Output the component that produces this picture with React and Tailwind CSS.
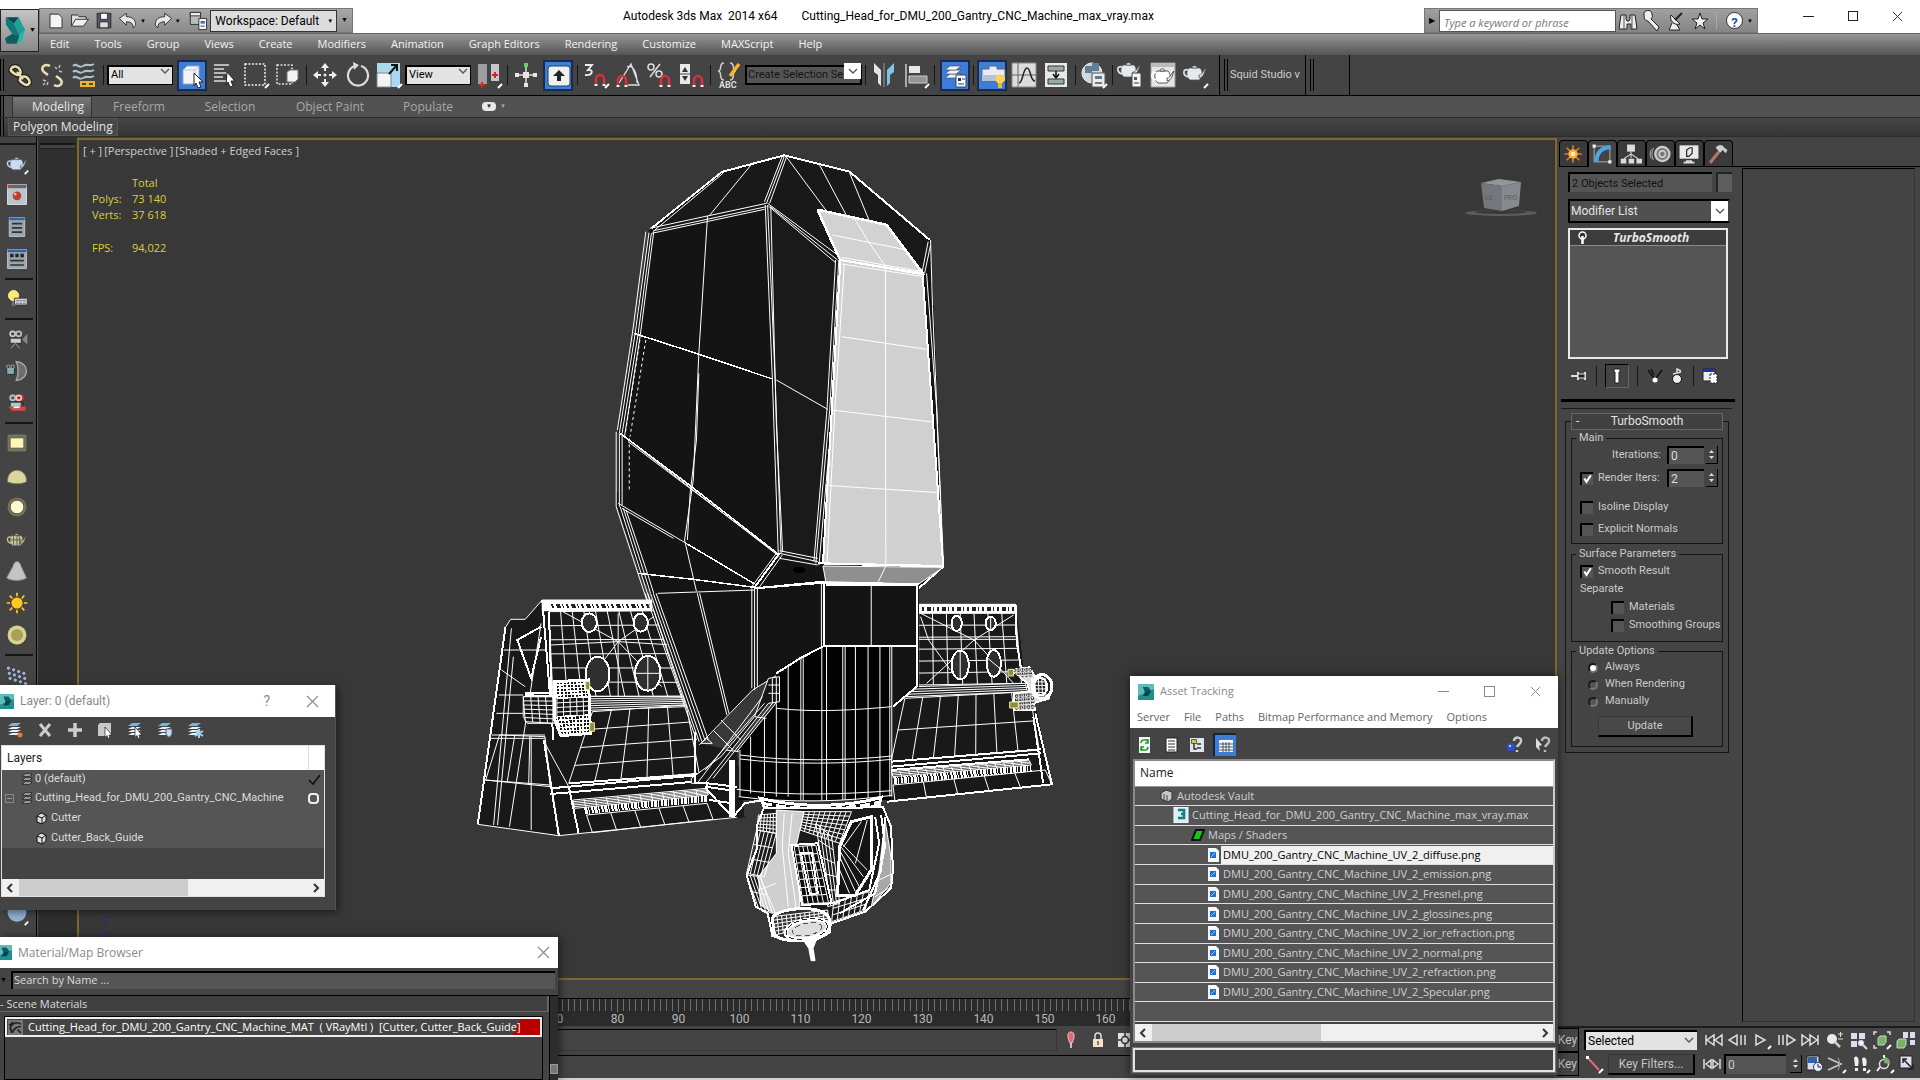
import React from 'react'

/* ---------- shared bits ---------- */

const Icon = ({ className = 'size-7', box = '0 0 28 28', children }) => (
  <svg viewBox={box} className={`${className} shrink-0`} fill="none" aria-hidden="true">{children}</svg>
)

const Chevron = ({ className }) => (
  <svg viewBox="0 0 10 6" className={`h-[6px] w-[10px] pointer-events-none ${className}`} fill="none">
    <path d="M1 1l4 4 4-4" stroke="#555" strokeWidth="1.3" />
  </svg>
)

const AppBadge = ({ className = 'size-4' }) => (
  <svg viewBox="0 0 16 16" className={`${className} shrink-0`}>
    <rect width="16" height="16" fill="#1f8f92" />
    <path d="M0 0h16v5L0 12z" fill="#5fbcb9" />
    <path d="M5 3h5l3 4-3 5H5l2-4z" fill="#083f46" />
    <path d="M5 3h5l3 4-6 1z" fill="#0b5f66" />
  </svg>
)

const Close = ({ className = 'size-[13px]', color = '#8a8a8a' }) => (
  <svg viewBox="0 0 13 13" className={className} fill="none">
    <path d="M1 1l11 11M12 1L1 12" stroke={color} strokeWidth="1.1" />
  </svg>
)

const flyout = <path d="M23 27l4-4" stroke="#fff" strokeWidth="2" />

const magnet = (x, y) => (
  <g key={x}>
    <path d={`M${x} ${y + 10}V${y + 4}a4 4 0 0 1 8 0v6`} stroke="#d8303a" strokeWidth="2.500" />
    <path d={`M${x - 1.5} ${y + 10}h3M${x + 6.5} ${y + 10}h3`} stroke="#eee" strokeWidth="2" />
  </g>
)

const teapot = (fill, line) => (
  <g fill={fill} stroke={line} strokeWidth=".8">
    <path d="M8 10h11c3 3 3 9-1 12H9c-4-3-4-9-1-12z" />
    <path d="M18 17c4 0 4-5 7-7-2 5-2 9-7 10z" />
    <path d="M11 10c0-3 5-3 5 0z" />
    <path d="M7 12c-5-2-6 5 0 7" fill="none" stroke={fill} strokeWidth="1.6" />
  </g>
)

/* ---------- title bar ---------- */

const quickAccess = [
  ['New', <path d="M7 6h10l4 4v12H7z" fill="#f4f4f4" stroke="#222" />],
  ['Open', <g stroke="#222"><path d="M4 20V7h7l2 2h8v4" fill="#ddd" /><path d="M4 20l5-8h15l-6 8z" fill="#f0f0f0" /></g>],
  ['Save', <g stroke="#222"><path d="M6 5h16v17H6z" fill="#556" /><path d="M10 5h8v7h-8z" fill="#fff" /><path d="M9 15h10v7H9z" fill="#ddd" /></g>],
]

const TitleBar = () => (
  <header className="flex h-[34px] shrink-0 items-start border-b border-[#666] bg-white text-black">
    <div className="ml-[39px] mt-2 flex h-[25px] w-[314px] items-center border border-[#777] bg-linear-to-b from-[#a8a8a8] to-[#8a8a8a] pl-1">
      {quickAccess.map(([name, art]) => (
        <button key={name} aria-label={name} className="w-6"><Icon className="size-6">{art}</Icon></button>
      ))}
      <button aria-label="Undo" className="flex w-[35px] items-center">
        <Icon className="size-6"><path d="M4 11l8-6v4c7 0 11 3 11 10l-3 3c0-5-2-7-8-7v4z" fill="#e8e8e8" stroke="#222" /></Icon>
        <span className="text-[6px]">▼</span>
      </button>
      <button aria-label="Redo" className="flex w-9 items-center">
        <Icon className="size-6"><path d="M24 11l-8-6v4C9 9 5 12 5 19l3 3c0-5 2-7 8-7v4z" fill="#e8e8e8" stroke="#222" /></Icon>
        <span className="text-[6px]">▼</span>
      </button>
      <button aria-label="Project folder" className="w-6">
        <Icon className="size-6">
          <path d="M5 4h12v14H5z" fill="#bbb" stroke="#222" /><path d="M5 4h12v4H5z" fill="#eee" stroke="#222" />
          <path d="M15 11h9v13h-9z" fill="#f4f4f4" stroke="#222" /><path d="M17 14h5v3h-5z" fill="#2f6fc4" /><path d="M17 20h5" stroke="#333" />
        </Icon>
      </button>
      <div className="relative mb-[3px] h-[22px] w-[128px]">
        <select aria-label="Workspace" className="size-full appearance-none border border-[#333] bg-[#dcdcdc] pl-1 text-[12px] leading-5">
          <option>Workspace: Default</option>
        </select>
        <span className="pointer-events-none absolute right-1 top-2 text-[6px]">▼</span>
      </div>
      <button aria-label="Customize toolbar" className="w-[15px] text-center text-[7px]">▼</button>
    </div>
    <div className="mx-auto mt-2 flex gap-6 text-[12px] leading-4">
      <span>Autodesk 3ds Max&nbsp; 2014 x64</span>
      <span>Cutting_Head_for_DMU_200_Gantry_CNC_Machine_max_vray.max</span>
    </div>
    <div className="mt-2 flex h-[25px] w-[334px] items-center border border-[#777] bg-linear-to-b from-[#a0a0a0] to-[#858585]">
      <button aria-label="Collapse search" className="w-[14px] text-[8px]">▶</button>
      <input aria-label="Search" placeholder="Type a keyword or phrase" className="h-[22px] w-[177px] border border-[#555] bg-white px-1 pt-1 font-['Open_Sans',sans-serif] text-[11px] italic placeholder:text-[#777]" />
      <button aria-label="Find" className="w-6">
        <Icon className="size-6" box="0 0 24 24"><path d="M5 6h5v4l1 2h2l1-2V6h5l2 14h-6v-5h-4v5H3z" fill="#eee" stroke="#222" /><path d="M8 6v14M16 6v14" stroke="#555" /></Icon>
      </button>
      <button aria-label="Sign in" className="w-6">
        <Icon className="size-6" box="0 0 24 24"><path d="M4 6a4 4 0 0 1 8-1 4 4 0 0 1-1 5l8 8-2 4-9-10c-3 0-4-3-4-6z" fill="#eee" stroke="#222" /></Icon>
      </button>
      <button aria-label="Subscription" className="w-6">
        <Icon className="size-6" box="0 0 24 24"><path d="M7 6c-2 5 3 11 9 9zM8 14l-3 7h11l-3-5" fill="#eee" stroke="#222" /><path d="M11 11l7-7" stroke="#222" strokeWidth="2" /></Icon>
      </button>
      <button aria-label="Favorites" className="w-7">
        <Icon className="size-6" box="0 0 24 24"><path d="M12 4l2 6h6l-5 4 2 6-5-4-5 4 2-6-5-4h6z" fill="#eee" stroke="#222" /></Icon>
      </button>
      <button aria-label="Help" className="flex w-10 items-center border-l border-[#aaa] pl-[9px] text-[6px]">
        <span className="mr-1 grid size-[17px] place-items-center rounded-full border border-[#333] bg-white text-[13px] font-bold text-[#1d4fb8]">?</span>▼
      </button>
    </div>
    <div className="ml-[45px] mr-[17px] mt-2 flex h-4 items-center gap-[34px]">
      <button aria-label="Minimize"><i className="block h-px w-[11px] bg-[#222]" /></button>
      <button aria-label="Maximize" className="size-[10px] border border-[#222]" />
      <button aria-label="Close"><Close color="#222" className="size-[11px]" /></button>
    </div>
  </header>
)

const menus = ['Edit', 'Tools', 'Group', 'Views', 'Create', 'Modifiers', 'Animation', 'Graph Editors', 'Rendering', 'Customize', 'MAXScript', 'Help']

const MenuBar = () => (
  <nav className="flex h-[21px] shrink-0 items-center gap-px bg-linear-to-b from-[#989898] to-[#555] pl-[38px] font-['Open_Sans',sans-serif] text-[11px] text-[#f2f2f2]">
    {menus.map((m) => <button key={m} className="px-3">{m}</button>)}
  </nav>
)

/* ---------- main toolbar ---------- */

const Tool = ({ name, active, children }) => (
  <button
    aria-label={name}
    className={active ? 'mx-px grid h-[31px] w-[30px] place-items-center border-2 border-[#1c2c48] bg-[#3d7dd8]' : 'grid h-8 w-8 place-items-center'}
  >
    <Icon>{children}</Icon>
  </button>
)

const Sep = ({ className = 'w-[5px]' }) => (
  <span className={`${className} flex h-5 justify-center`}><i className="h-full w-px bg-[#161616]" /></span>
)

const Grip = () => <span className="h-8 w-1 shrink-0 border-x border-black" />

const ToolSelect = ({ label, value, className }) => (
  <span className={`relative mb-2 h-[20px] ${className}`}>
    <select aria-label={label} className="size-full appearance-none border-2 border-b border-r border-black bg-[#e3e3e3] pl-[2px] text-[11px] leading-4 text-black">
      <option>{value}</option>
    </select>
    <Chevron className="absolute right-[3px] top-[7px]" />
  </span>
)

const sheets = (x, y) => (
  <g fill="#f4f4f4" stroke="#345" strokeWidth=".6">
    <path d={`M${x} ${y + 12}l5-4h11l-5 4z`} /><path d={`M${x} ${y + 8}l5-4h11l-5 4z`} /><path d={`M${x} ${y + 4}l5-4h11l-5 4z`} />
  </g>
)

const Toolbar = () => (
  <div className="flex h-[41px] shrink-0 items-center overflow-hidden border-b border-black bg-[#444]">
    <Grip />
    <Tool name="Link">
      <g stroke="#222" strokeWidth="5"><path d="M5 8c2-4 7-3 9 1s-2 6-5 4-5-3-4-5zM14 18c2-4 7-3 9 1s-2 6-5 4-5-3-4-5z" /></g>
      <g stroke="#e8dfb0" strokeWidth="2.500"><path d="M5 8c2-4 7-3 9 1s-2 6-5 4-5-3-4-5zM14 18c2-4 7-3 9 1s-2 6-5 4-5-3-4-5zM11 11l6 7" /></g>
    </Tool>
    <Tool name="Unlink">
      <path d="M12 5C6 2 2 7 6 11l4 3M16 24c6 3 10-2 6-6l-4-3" stroke="#e8dfb0" strokeWidth="2.500" />
      <path d="M17 6l2 2M22 4l-1 3M21 10l3 1M5 19l3 1M9 24l1-3M5 24l2-2" stroke="#bbb" strokeWidth="1.500" />
    </Tool>
    <Tool name="Bind to space warp">
      <path d="M3 5c4-4 5 3 10 0s6 1 11-2M3 11c4-4 5 3 10 0s6 1 11-2M3 17c4-4 5 3 10 0s6 1 11-2" stroke="#aebfc8" strokeWidth="2" />
      <path d="M11 21h6v4h-6zM18 21h6v4h-6z" stroke="#eeb422" strokeWidth="2" />
    </Tool>
    <Sep className="w-[7px]" />
    <ToolSelect label="Selection filter" value="All" className="w-[66px]" />
    <span className="w-[3px]" />
    <Tool name="Select object" active>
      <path d="M4 8l4-4h12v14l-4 4H4z" fill="#f2f4f7" stroke="#9ab" /><path d="M16 8v14M4 8h12l4-4" stroke="#b9c3cf" />
      <path d="M15 11l9 9h-4l2 5-3 1-2-5-2 3z" fill="#fff" stroke="#222" />
    </Tool>
    <Tool name="Select by name">
      <path d="M4 4h15M4 8h10M4 12h13M4 16h9M4 20h12" stroke="#ddd" strokeWidth="1.500" />
      <path d="M17 11l8 9h-4l2 5-3 1-2-5-2 3z" fill="#fff" stroke="#222" />
    </Tool>
    <Tool name="Rectangular region"><path d="M3 3h20v21H3z" stroke="#eee" strokeWidth="1.500" strokeDasharray="2 1.500" />{flyout}</Tool>
    <Tool name="Window crossing">
      <path d="M3 4h15v19H3z" stroke="#ddd" strokeWidth="1.500" strokeDasharray="2 1.500" /><path d="M13 11l3-2h8v9l-3 3h-8z" fill="#f4f4f4" stroke="#777" />
    </Tool>
    <Sep />
    <Tool name="Move">
      <path d="M14 6v4M14 18v4M6 14h4M18 14h4" stroke="#eee" strokeWidth="2" />
      <path d="M10 7l4-5 4 5zM10 21l4 5 4-5zM7 10l-5 4 5 4zM21 10l5 4-5 4z" fill="#eee" />
      <circle cx="14" cy="14" r="1.500" fill="#eee" />
    </Tool>
    <Tool name="Rotate"><path d="M18 5a10 10 0 1 1-6 0" stroke="#ddd" strokeWidth="2.200" /><path d="M10 1l6 3-5 5z" fill="#ddd" /></Tool>
    <Tool name="Scale">
      <path d="M2 2h23v24H2z" fill="#a9d8ef" /><path d="M2 12h14v14H2z" fill="#f4f4f4" stroke="#789" /><path d="M14 13l8-9M16 4h6v6" stroke="#111" strokeWidth="2" />{flyout}
    </Tool>
    <ToolSelect label="Reference coordinate system" value="View" className="w-[66px]" />
    <span className="w-[2px]" />
    <Tool name="Pivot center">
      <path d="M3 3h9v20H3z" fill="#9aa0a6" /><path d="M16 3h8v17h-8z" fill="#c4c8cc" /><path d="M7 21v6M4 24h6M20 11v6M17 14h6" stroke="#e02020" strokeWidth="2" />{flyout}
    </Tool>
    <Sep />
    <Tool name="Manipulate">
      <path d="M14 5v18M5 14h18" stroke="#ddd" strokeWidth="1.500" /><path d="M12 2h4v4h-4z" fill="#66d264" /><path d="M11 11h6v6h-6zM3 12h4v4H3zM21 12h4v4h-4zM12 22h4v4h-4z" fill="#e6e6e6" />
    </Tool>
    <Tool name="Keyboard override" active>
      <rect x="3" y="4" width="22" height="20" rx="3" fill="#eef0f2" stroke="#246" /><path d="M14 8l6 6h-4v5h-4v-5H8z" fill="#222" />
    </Tool>
    <Sep className="w-[6px]" />
    <Tool name="Snaps"><path d="M3 4h7l-4 5c6-1 5 6-3 5" stroke="#eee" strokeWidth="1.800" />{magnet(14, 14)}{flyout}</Tool>
    <Tool name="Angle snap"><path d="M5 22L17 3l8 21H14M13 6c5-3 10 4 10 16" stroke="#ddd" strokeWidth="1.300" />{magnet(4, 15)}</Tool>
    <Tool name="Percent snap"><circle cx="5" cy="6" r="3" stroke="#ddd" strokeWidth="1.500" /><circle cx="13" cy="13" r="3" stroke="#ddd" strokeWidth="1.500" /><path d="M14 3L4 16" stroke="#ddd" strokeWidth="1.500" />{magnet(15, 15)}</Tool>
    <Tool name="Spinner snap"><path d="M2 3h10v20H2z" fill="#e8e8e8" /><path d="M4 11l3-5 3 5zM4 15l3 5 3-5z" fill="#333" /><path d="M2 13h10" stroke="#444" />{magnet(16, 15)}</Tool>
    <Sep />
    <Tool name="Edit named selections">
      <path d="M9 2C3 2 8 10 3 10c5 0 0 9 6 9M15 2c6 0 1 8 6 8-5 0 0 9-6 9" stroke="#ccc" strokeWidth="1.500" />
      <path d="M24 3l-9 12" stroke="#f2b632" strokeWidth="3.500" />
      <text x="4" y="27" fontSize="9" fontWeight="700" fill="#ddd">ABC</text>
    </Tool>
    <span className="relative mb-2 h-[20px] w-[117px]">
      <input aria-label="Named selection set" defaultValue="Create Selection Se" className="size-full border-2 border-black bg-[#555] pl-px pr-[17px] text-[11px] leading-4 text-[#141414]" />
      <span className="absolute right-px top-[2px] grid h-[16px] w-[17px] place-items-center bg-white"><Chevron /></span>
    </span>
    <Sep className="w-[6px]" />
    <Tool name="Mirror"><path d="M4 2l7 7v16l-3-3v-8l-4-3v12z" fill="#e4e4e4" /><path d="M14 2v24" stroke="#999" /><path d="M24 2l-7 7v16l3-3v-8l4-3v12z" fill="#7cc4e8" /></Tool>
    <Tool name="Align"><path d="M4 3v23" stroke="#ccc" strokeWidth="1.500" /><path d="M7 5h11v7H7z" fill="#e8e8e8" /><path d="M7 15h18v7H7z" fill="#8f969c" stroke="#ccc" />{flyout}</Tool>
    <Sep />
    <span className="w-[2px]" />
    <Tool name="Layer manager" active>{sheets(3, 4)}<path d="M14 13h10v12H14z" fill="#fff" stroke="#345" /><path d="M16 16h3v3h-3z" fill="#236" /><path d="M20 17h3M16 22h6" stroke="#236" /></Tool>
    <Sep />
    <Tool name="Toggle ribbon" active><path d="M3 7h7V4h8v3h8v12H3z" fill="#e8ecf2" stroke="#567" /><path d="M3 13h23v6H3z" fill="#b9c4d2" /><circle cx="21" cy="17" r="4.500" fill="#ffd24a" /><path d="M19 21h4v5h-4z" fill="#e8b83a" /></Tool>
    <Tool name="Curve editor"><path d="M2 2h24v24H2z" fill="#dcdcdc" stroke="#888" /><path d="M8 2v24M2 14h24" stroke="#666" /><path d="M9 22c4 0 4-15 8-15s3 13 8 13" stroke="#222" strokeWidth="1.500" /></Tool>
    <Tool name="Schematic view"><path d="M3 2h22v24H3z" fill="#e8e8e8" /><path d="M6 5h16v5H6zM6 18h16v5H6z" fill="#9aa" stroke="#333" /><path d="M14 10v6M11 13l3 4 3-4" stroke="#111" strokeWidth="1.500" /></Tool>
    <Sep className="w-[6px]" />
    <Tool name="Material editor"><circle cx="12" cy="12" r="10" fill="#cfd8de" stroke="#eee" /><path d="M5 5h7v7H5zM12 12h8v7h-8zM12 2h7v8h-7z" fill="#5f7f96" /><path d="M12 12h13v14H12z" fill="#ececec" stroke="#555" /><path d="M15 15h7v3h-7zM15 21h7v2h-7z" fill="#678" />{flyout}</Tool>
    <Sep />
    <Tool name="Render setup"><g transform="translate(-2 -6)">{teapot('#e6e9ee', '#555')}</g><path d="M15 12h9v14h-9z" fill="#f6f6f6" stroke="#444" /><path d="M17 16h3v3h-3z" fill="#2c5fb0" /><path d="M17 22h5" stroke="#333" /></Tool>
    <Tool name="Rendered frame"><path d="M2 2h24v24H2z" fill="#e6e6e6" stroke="#999" /><path d="M2 2h24v4H2z" fill="#bbb" />{teapot('#fff', '#333')}</Tool>
    <Tool name="Render"><g transform="translate(0 -3)">{teapot('#e6e9ee', '#555')}</g>{flyout}</Tool>
    <span className="ml-2 h-full w-px bg-black" />
    <span className="w-1" />
    <Grip />
    <button className="h-full px-[2px] text-[11px] text-[#ccc]">Squid Studio v</button>
    <span className="ml-[3px] h-full w-px bg-black" />
    <span className="w-1" />
    <Grip />
    <span className="h-full w-9 border-r border-black" />
  </div>
)

const Ribbon = () => (
  <div className="shrink-0 font-['Open_Sans',sans-serif] text-[12px]">
    <div className="flex h-[21px] items-center bg-[#525252] text-[#a8a8a8]">
      <span className="h-full w-1 border-x border-black bg-[#444]" />
      <button className="ml-2 h-full w-20 border border-b-0 border-[#333] bg-linear-to-b from-[#777] to-[#555] pl-3 text-[#e6e6e6]">Modeling</button>
      <button className="w-[94px]">Freeform</button>
      <button className="w-[88px]">Selection</button>
      <button className="w-[112px]">Object Paint</button>
      <button className="w-[84px]">Populate</button>
      <button aria-label="Ribbon options" className="ml-3 flex items-center gap-1 text-[6px]">
        <span className="grid h-[9px] w-[14px] place-items-center rounded-sm bg-[#e8e8e8] text-[#222]">▼</span>▼
      </button>
    </div>
    <div className="flex h-[20px] items-center border-b border-t border-[#2c2c2c] bg-linear-to-b from-[#464646] to-[#363636]">
      <span className="h-full w-1 border-x border-black bg-[#444]" />
      <button className="ml-1 h-[18px] border border-[#555] bg-[#484848] px-1 text-[12px] leading-4 text-[#e6e6e6]">Polygon Modeling</button>
    </div>
  </div>
)

/* ---------- left tool column ---------- */

const camera = (a, b) => (
  <g><circle cx="9" cy="8" r="3" stroke={a} strokeWidth="2" /><circle cx="16" cy="8" r="3" stroke={b} strokeWidth="2" /><path d="M6 13h13v6H6z" fill={a} stroke="#222" /></g>
)

const sideTools = [
  ['Teapot', <g>{teapot('#c9dcef', '#557')}{flyout}</g>],
  ['Frame buffer', <g><path d="M3 2h22v23H3z" fill="#b8c4d0" stroke="#eee" /><path d="M3 2h22v4H3z" fill="#666" /><path d="M4 4h3" stroke="#e33" strokeWidth="2" /><circle cx="14" cy="15" r="5" fill="#b8402e" /><circle cx="12" cy="13" r="1.500" fill="#f4b0a0" /></g>],
  ['Light lister', <g><path d="M5 3h18v22H5z" fill="#9aa5ae" stroke="#ccc" /><path d="M5 3h18v3H5z" fill="#2a62b4" /><path d="M8 10h12M8 15h12M8 20h12" stroke="#333" strokeWidth="2" /></g>],
  ['Camera lister', <g><path d="M3 3h22v22H3z" fill="#9aa5ae" stroke="#ccc" /><path d="M3 3h22v3H3z" fill="#2a62b4" /><path d="M6 10h4M12 10h4M18 10h4" stroke="#222" strokeWidth="4" /><path d="M6 16h16M6 21h16" stroke="#333" strokeWidth="2" /></g>],
  null,
  ['Light properties', <g><circle cx="10" cy="10" r="6" fill="#ffe96a" stroke="#fff6b0" /><path d="M8 17h5v5H8z" fill="#777" /><path d="M11 13h15v8H11z" fill="#ccd" stroke="#333" /><path d="M13 16h11M13 19h11" stroke="#666" strokeDasharray="3 1" /></g>],
  null,
  ['Physical camera', <g>{camera('#ccc', '#bbb')}<path d="M26 8v12l-6-5z" fill="#888" /><path d="M12 19l-5 6M12 19l5 6" stroke="#aaa" /></g>],
  ['Dome camera', <g><path d="M13 3c16 1 16 21 0 22 3-6 3-16 0-22z" fill="#6d6d6d" stroke="#aaa" strokeWidth="1.500" /><path d="M2 10h9v8H2z" fill="#8aa" stroke="#222" /><circle cx="4" cy="9" r="2" stroke="#9bc" /><circle cx="9" cy="9" r="2" stroke="#9bc" /></g>],
  ['Stereo camera', <g><g transform="translate(2 0)">{camera('#e02a2a', '#e02a2a')}</g>{camera('#8fd4d8', '#f0c8c8')}<path d="M4 18h20v5H8z" fill="#d44" /><path d="M10 19h7" stroke="#fff" strokeWidth="2" /></g>],
  null,
  ['Plane light', <g><rect x="3" y="4" width="22" height="20" rx="2" fill="#77745c" /><path d="M6 8h16v12H6z" fill="#fdf9b4" stroke="#555" /></g>],
  ['Dome light', <path d="M3 22C2 4 26 4 25 22c-6 3-16 3-22 0z" fill="#d9d79a" stroke="#777" />],
  ['Sphere light', <g><circle cx="14" cy="14" r="11" fill="#77745c" /><circle cx="14" cy="14" r="8" fill="#fdfbd0" stroke="#444" /></g>],
  ['Mesh light', <g>{teapot('#c8c49a', '#444')}<path d="M10 11v10M14 10v12M17 11v10M7 15h13" stroke="#554" /></g>],
  ['IES light', <path d="M14 3c2 0 4 2 5 6l6 13c-5 4-18 4-23 0L9 9c1-4 3-6 5-6z" fill="#c4c4c4" stroke="#888" />],
  ['Sun', <g><circle cx="14" cy="14" r="6.500" fill="#ffc81e" /><path d="M14 2v4M14 22v4M2 14h4M22 14h4M5.500 5.500l3 3M19.500 19.500l3 3M22.500 5.500l-3 3M8.500 19.500l-3 3" stroke="#ffc81e" strokeWidth="2" /></g>],
  ['Ambient light', <g><circle cx="14" cy="14" r="11" fill="#d8d490" /><circle cx="14" cy="14" r="7" fill="#a8a05c" /></g>],
  null,
  ['Particles', <g fill="#9fb4c8" stroke="#334">{[0, 1, 2].map((r) => [0, 1, 2, 3].map((c) => <circle key={`${r}${c}`} cx={4 + c * 6 + r} cy={6 + r * 6 + c * 2} r="2.500" />))}</g>],
]

const SideTools = () => (
  <>
    <aside className="flex w-[37px] shrink-0 flex-col border-r border-black bg-[#444] pt-[6px]">
      <i className="mb-[2px] h-[2px] w-9 bg-[#161616]" />
      {sideTools.map((t, i) => t
        ? <button key={t[0]} aria-label={t[0]} className="grid h-8 w-[34px] shrink-0 place-items-center"><Icon className="size-6">{t[1]}</Icon></button>
        : <i key={i} className="my-[3px] ml-[5px] h-[2px] w-7 shrink-0 bg-[#161616]" />)}
      <button aria-label="Sphere" className="mt-auto grid h-8 w-[34px] place-items-center">
        <Icon className="size-6"><circle cx="14" cy="12" r="11" fill="#8fb4d4" />{flyout}</Icon>
      </button>
      <button aria-label="Proxy" className="mb-[68px] grid h-7 w-[26px] place-items-center">
        <Icon className="size-4" box="0 0 16 16"><path d="M1 1h14v14H1z" fill="#ddd" /><circle cx="8" cy="7" r="4" stroke="#333" strokeWidth="1.500" /></Icon>
      </button>
    </aside>
    <div className="w-10 shrink-0 border-l border-[#555] bg-[#2f2f2f]">
      <i className="mx-[2px] mt-[6px] block h-[2px] bg-[#161616]" />
      <i className="mx-[2px] block h-[4px] border-b border-[#222] bg-[#444]" />
    </div>
  </>
)

/* ---------- viewport ---------- */

// straight wire grid between the corners of a quad
const grid = (a, b, c, d, cols, rows) => {
  const mix = (p, q, t) => [p[0] + (q[0] - p[0]) * t, p[1] + (q[1] - p[1]) * t]
  const at = (p) => `${p[0].toFixed(1)} ${p[1].toFixed(1)}`
  let out = ''
  for (let i = 0; i <= cols; i++) out += `M${at(mix(a, b, i / cols))}L${at(mix(d, c, i / cols))}`
  for (let j = 0; j <= rows; j++) out += `M${at(mix(a, d, j / rows))}L${at(mix(b, c, j / rows))}`
  return out
}

const Hood = () => (
  <g>
    <path d="M480 265L660 95 820 45 985 95 1190 300 1200 560 1225 1280 1160 1345 1160 1400 500 1400 455 1300 398 1100 400 870 440 580z" fill="#141414" stroke="none" />
    <path d="M480 265L660 95 820 45 985 95 1190 300 1170 400 1078 255 905 210 958 350 778 190z" fill="#191919" stroke="none" />
    <path d="M778 190L960 360 905 1270 808 1240z" fill="#1a1a1a" stroke="none" />
    {/* double outlines */}
    <g strokeWidth="2">
      <path d="M484 265L662 96 820 46 985 95 1188 300" />
      <path d="M905 210L1078 255 1170 400M905 210L960 355" strokeWidth="3" />
      <path d="M440 580L600 641 790 717M405 880L580 1035 808 1245M450 1300L590 1318 745 1342M575 1212L745 1332" strokeWidth="1.500" />
      <path d="M745 1345L920 1325 1160 1332M808 1240L745 1342" />
      <path d="M905 1270L1222 1280M1222 1280L1160 1345" />
    </g>
    <g strokeWidth="1">
      <path d="M488 275L665 100M820 50L775 190M826 50L783 190M816 45L770 185M738 72L632 225M825 50L925 210M908 72L978 228M985 98L1035 242" />
      <path d="M480 265L775 190M490 272L775 200M485 280L770 208M778 190L955 345M785 200L955 360M780 198L950 368" />
      <path d="M470 275L436 580 398 870M478 278L443 580 403 880M484 280L450 585 410 880M490 275L456 585 416 890" />
      <path d="M470 600L430 890M455 600L418 880M428 895L428 1050" strokeDasharray="3 3" />
      <path d="M626 228L604 641 590 1020 568 1200 605 1390M604 700L598 900 582 1060 575 1200" />
      <path d="M772 195L790 717 805 1245M778 195L797 717 812 1240M786 200L792 480 800 850 816 1235" />
      <path d="M800 720L930 808M395 875V1100M403 880V1100M410 885V1095" />
      <path d="M415 890L808 1250M425 905L800 1240M400 1090L575 1212M410 1105L540 1195" />
      <path d="M395 1100L450 1300 475 1390M405 1100L458 1300 482 1390M413 1105L466 1300 490 1390M420 1110L474 1300 498 1390" />
      <path d="M480 1362L745 1350M800 1240L735 1345M815 1245L755 1345M808 1240L905 1265M808 1255L905 1275M808 1232L905 1255" />
      <path d="M958 360L935 810 900 1270M963 360L942 810 908 1275M950 360L928 810 895 1265M1190 300L1195 500 1222 1250M1184 305L1168 400M1190 315L1175 400M1180 400L1205 800 1222 1280" />
    </g>
    <path d="M905 210L1078 255 1170 400 962 360z" fill="#d2d2d2" strokeWidth="2" />
    <path d="M962 360L1170 403 1222 1278 918 1270z" fill="#d0d0d0" strokeWidth="2" />
    <path d="M918 1278L1222 1282 1160 1332 925 1325z" fill="#8f8f8f" />
    <path d="M997 234L1033 305 1076 378 1077 1278 1058 1325M942 285L1130 330M965 590L1180 628M940 810L1195 846M925 1036L1210 1058M972 370L948 810 928 1275M965 352L1170 395M965 372L1172 410" />
    <ellipse cx="858" cy="1290" rx="16" ry="10" fill="#000" stroke="none" />
  </g>
)

const hole = (x, y, rx, ry) => <ellipse key={`${x}-${y}`} cx={x} cy={y} rx={rx} ry={ry} fill="#2f2f2f" strokeWidth="2" />

const LeftRail = () => (
  <g>
    <path d="M115 172L128 148H165L208 90H490L610 520 700 545 720 742 250 797 45 763z" fill="#191919" stroke="none" />
    <path d="M45 763L250 797 700 742" />
    <path d="M115 172L45 763M212 510L250 797M235 510L225 125M228 380L208 90M275 650L300 790M205 170L145 210 180 325 205 200" strokeWidth="2" />
    <path d="M130 175L85 765M135 260L95 765M205 160L125 770M180 500V780M250 790L215 520 275 650" />
    <path d="M128 148H165M128 148L115 172M165 148L208 90M110 240H220M105 300L165 350M98 375H160M92 430H160M80 495H215M78 505H215M62 630L228 645" />
    <path d={grid([100, 495], [215, 500], [228, 650], [65, 630], 3, 1)} />
    {/* punched plate */}
    <path d={grid([225, 125], [490, 122], [562, 380], [235, 378], 9, 6)} />
    <path d="M400 215L260 125M400 215L490 140M400 215L300 370M400 215L510 350M400 215L230 225M400 215L540 225M400 130V380" />
    {hole(327, 158, 19, 28)}{hole(457, 158, 18, 27)}{hole(348, 312, 30, 52)}{hole(475, 310, 32, 52)}
    <path d="M475 258V362M443 310H507" />
    <path d="M208 90H485V122H208z" fill="#fff" />
    <path d="M230 104H480M232 112H480" stroke="#222" strokeWidth="2" strokeDasharray="2 3 4 2 1 3" />
    <path d={grid([235, 380], [565, 378], [570, 410], [235, 425], 1, 6)} />
    <path d={grid([335, 425], [572, 405], [605, 610], [275, 640], 5, 4)} />
    <path d="M228 655L610 615M228 672L625 632M275 640L605 612" strokeWidth="2" />
    <path d={grid([285, 690], [625, 655], [628, 675], [290, 715], 12, 5)} />
    <path d="M315 722L625 685" strokeWidth="7" strokeDasharray="3 1 1 2 2 1" />
    <path d={grid([320, 735], [625, 700], [640, 748], [335, 788], 5, 1)} />
    {/* bearing block */}
    <path d="M160 380H235V460H170L160 440z" fill="#151515" /><path d={grid([160, 380], [235, 380], [240, 460], [165, 455], 4, 6)} />
    <path d="M240 335L325 330 330 490 255 497 240 450z" fill="#151515" strokeWidth="3" />
    <path d={grid([243, 335], [322, 332], [328, 380], [245, 385], 9, 5)} strokeWidth="1.500" />
    <path d={grid([245, 385], [328, 380], [330, 435], [245, 440], 5, 4)} />
    <path d={grid([245, 440], [330, 435], [328, 490], [255, 495], 9, 5)} strokeWidth="1.500" />
    <path d="M318 335h10v24h-10zM328 458h12v26h-12z" fill="#8f8c40" stroke="#f0eda0" />
    <path d="M165 370H240M165 375L240 380" strokeWidth="2" />
  </g>
)

const RightRail = () => (
  <g>
    <path d="M1160 103H1405L1418 215 1425 300 1460 430 1497 643 1080 697 1090 400z" fill="#191919" stroke="none" />
    <path d={grid([1160, 130], [1405, 130], [1420, 340], [1160, 345], 7, 6)} />
    <path d="M1300 210L1165 130M1300 210L1400 135M1300 210L1180 340M1300 210L1400 340M1185 210L1165 140M1185 210L1240 300M1160 208H1410" />
    {hole(1256, 160, 13, 23)}{hole(1342, 160, 13, 20)}{hole(1265, 285, 22, 43)}{hole(1350, 280, 18, 40)}
    <path d="M1342 142V178M1265 245V326M1335 265L1365 295" />
    <path d="M1160 103H1405V128H1160z" fill="#fff" />
    <path d="M1168 114H1400M1168 121H1400" stroke="#222" strokeWidth="2" strokeDasharray="2 3 4 2 1 3" />
    <path d="M1405 105L1408 215 1418 290M1455 430L1497 643 1080 695M1450 440L1475 640" strokeWidth="2" />
    <path d={grid([1150, 350], [1430, 340], [1435, 365], [1130, 380], 1, 4)} />
    <path d={grid([1125, 385], [1440, 365], [1465, 540], [1090, 575], 7, 2)} />
    <path d="M1090 575L1470 538M1090 590L1470 550M1090 600L1440 568" strokeWidth="2" />
    <path d={grid([1090, 605], [1440, 572], [1445, 585], [1095, 620], 16, 3)} />
    <path d="M1097 632L1445 595" strokeWidth="7" strokeDasharray="3 1 1 2 2 1" />
    <path d={grid([1095, 645], [1480, 600], [1497, 643], [1100, 692], 5, 1)} />
    <path d="M1395 300L1440 292 1455 320 1490 330V385L1450 400 1455 420 1400 420 1400 370 1440 365 1435 340z" fill="#ddd" strokeWidth="2" />
    <path d={grid([1400, 297], [1445, 295], [1445, 318], [1400, 322], 8, 3)} stroke="#333" strokeDasharray="2 2" />
    <path d={grid([1405, 375], [1450, 370], [1452, 415], [1405, 418], 8, 5)} stroke="#333" strokeDasharray="2 2" />
    <ellipse cx="1472" cy="350" rx="25" ry="36" fill="#222" strokeWidth="3" />
    <ellipse cx="1468" cy="350" rx="17" ry="26" strokeWidth="2" />
    <path d={grid([1445, 325], [1480, 325], [1482, 378], [1447, 378], 4, 5)} />
    <path d="M1386 298h14v20h-14zM1390 396h22v18h-22z" fill="#8f8c40" stroke="#f0eda0" />
  </g>
)

const Spindle = () => (
  <g>
    {/* neck panels */}
    <path d="M480 68L745 55 920 38 1160 44V350L1095 410 920 230 740 360 610 525z" fill="#141414" stroke="none" />
    <path d="M500 70L745 60M600 70L675 435M606 70L680 430M745 50V360M752 50V350M738 55V355" />
    <path d="M475 70L605 515M482 70L612 515M489 70L620 512M496 70L628 510M468 70L598 510" />
    <path d="M605 525L740 360 920 230M610 520h28l-15-15z" />
    <path d="M745 55L920 38 1160 42M920 38V228M925 45H1155V225M1155 45V350L1095 410" strokeWidth="2" />
    <path d="M1040 45V225M914 38V228" />
    {/* drum */}
    <path d="M920 228L1090 228V690H705V540L800 400V315z" fill="#020202" stroke="none" />
    <path d="M800 310L860 265 920 228H1155" strokeWidth="2" />
    <path d="M830 290V680M862 268V690M868 262V690M915 232V690M927 230V690M968 230V690M974 230V690M1000 230V690M1032 230V685M1062 230V685M1087 228V680M1092 228V680M800 400V680M770 440V680M735 500V670M708 540V680" />
    <path d="M800 415C900 428 1000 420 1092 410M708 555C830 575 980 572 1092 558M708 567C830 585 980 582 1092 568M700 658C830 680 980 672 1092 662M705 680C830 700 980 695 1092 676" />
    {/* brace */}
    <path d="M780 325L808 320V395L780 400 620 640H585V625L660 560 745 440z" fill="#161616" />
    <path d="M790 325V400L640 625M800 322V398L700 545M770 400L620 600M745 440L775 445M672 540L705 545M780 345h28M780 370h28M765 380L600 640M640 480L690 540M660 450L710 510" />
    <path d="M595 485V640H625V660L690 742 720 700 765 690" strokeWidth="2" />
    <path d="M688 570V740" strokeWidth="6" /><path d="M625 640L700 650M620 650L680 660M630 690L690 700" strokeWidth="2" />
    {/* collar */}
    <path d="M760 685C860 715 980 712 1065 682L1060 705C980 735 860 735 770 712z" fill="#111" strokeWidth="3" />
    <path d="M765 700C860 722 980 720 1062 696" strokeDasharray="10 4" strokeWidth="3" />
    {/* cutting head */}
    <path d="M768 715L1070 712 1090 770 1095 900 1090 955 1025 1025 940 1060 930 1090 900 1110 825 1110 790 1098 778 1030 748 1010 725 915 750 840 750 770z" fill="#1b1b1b" strokeWidth="2" />
    <path d="M800 720L870 725 850 830 860 1010 800 1035 760 1005 755 920 800 850z" fill="#cfcfcf" />
    <path d="M1075 750L1090 860V940L1040 1010 1060 900z" fill="#a8a8a8" />
    <path d={grid([755, 735], [800, 730], [800, 790], [750, 780], 6, 5)} />
    <path d={grid([750, 780], [800, 790], [770, 920], [725, 910], 5, 3)} />
    <path d={grid([725, 915], [760, 920], [790, 1030], [755, 1015], 4, 2)} />
    <path d={grid([870, 725], [990, 725], [960, 820], [860, 780], 9, 7)} />
    <path d={grid([900, 760], [940, 800], [960, 1000], [930, 1010], 4, 5)} />
    <path d="M838 825L905 820 940 1000 865 1005z" fill="#0d0d0d" strokeWidth="2" />
    <path d={grid([845, 830], [900, 826], [932, 998], [868, 1002], 5, 7)} />
    <path d="M862 850L890 848 905 970 885 972z" strokeWidth="2" />
    <path d="M990 755L1040 740V900L1000 975H955L960 830z" fill="#141414" strokeWidth="3" />
    <path d="M960 825L1020 920M960 840L1010 950M960 860L1000 965M960 900L985 970M1015 755L970 830M1030 750L1000 880M965 820L1030 900" />
    <path d="M1050 740L1060 820 1035 960 945 1000M1065 735L1075 830 1050 970 960 1030M1075 740L1065 900 1020 1020" strokeWidth="2" />
    <path d={grid([945, 995], [1035, 965], [1025, 1020], [940, 1055], 6, 3)} />
    <path d="M755 960L800 940M760 925L800 1035M820 730L815 830 830 1010M840 730L830 850 850 1010M1060 930L1095 910M1050 980L1090 950" />
    {/* nose */}
    <path d="M790 1045C800 1010 930 1000 935 1050V1085C900 1120 820 1120 795 1095z" fill="#333" strokeWidth="3" />
    <path d={grid([790, 1040], [930, 1020], [932, 1060], [795, 1095], 12, 5)} />
    <ellipse cx="877" cy="1078" rx="55" ry="28" transform="rotate(-14 877 1078)" fill="#ddd" strokeWidth="4" />
    <ellipse cx="877" cy="1078" rx="53" ry="30" transform="rotate(-14 877 1078)" stroke="#222" strokeDasharray="5 3" />
    <ellipse cx="878" cy="1078" rx="38" ry="18" transform="rotate(-14 878 1078)" stroke="#555" strokeDasharray="5 3" />
    <path d="M865 1105L905 1098 893 1135 898 1172H888L882 1135z" fill="#fff" />
  </g>
)

const stats = [['Polys:', '73 140'], ['Verts:', '37 618']]

const Viewport = () => (
  <section className="relative mt-px min-h-0 flex-1 overflow-hidden border-2 border-[#7d6a2a] bg-[#383838] font-['Open_Sans',sans-serif]">
    <div className="flex gap-[2px] pl-1 pt-[3px] text-[11px] leading-4 text-[#cfcfcf]">
      <button>[ + ]</button><button>[Perspective ]</button><button>[Shaded + Edged Faces ]</button>
    </div>
    <table className="ml-[13px] mt-[15px] text-left text-[11px] leading-4 text-[#d8d03c]">
      <thead><tr className="h-[17px]"><td className="w-10" /><th className="font-normal">Total</th></tr></thead>
      <tbody>
        {stats.map(([k, v]) => <tr key={k} className="h-[16px]"><th className="font-normal">{k}</th><td>{v}</td></tr>)}
        <tr className="h-[17px]"><td /></tr>
        <tr className="h-[16px]"><th className="font-normal">FPS:</th><td>94,022</td></tr>
      </tbody>
    </table>
    <svg
      viewBox="0 0 1568 2490"
      preserveAspectRatio="none"
      shapeRendering="crispEdges"
      className="absolute left-[381px] top-0 h-[830px] w-[620px] [&_*]:[vector-effect:non-scaling-stroke]"
      fill="none"
      stroke="#fff"
    >
      <g transform="translate(0 1290)"><LeftRail /><RightRail /></g>
      <Hood />
      <g transform="translate(0 1290)"><Spindle /></g>
    </svg>
    {/* view cube */}
    <svg viewBox="0 0 76 44" className="absolute right-4 top-9 h-[44px] w-[76px]">
      <ellipse cx="38" cy="37" rx="36" ry="3" fill="#5a5d60" />
      <ellipse cx="38" cy="36" rx="26" ry="2" fill="#3a3a3a" />
      <path d="M18 7l18-4 22 3-19 4z" fill="#93979b" />
      <path d="M18 7l21 3v25l-18-3z" fill="#74787c" />
      <path d="M39 10l19-4-2 24-17 5z" fill="#868a8e" />
      <text x="22" y="24" fontSize="7" fill="#55595d">LE</text>
      <text x="41" y="24" fontSize="7" fill="#55595d">FRO</text>
    </svg>
    <div className="absolute bottom-3 left-6 flex flex-col items-center text-[12px] leading-3 text-[#2020c8]">
      z<i className="mt-1 h-9 w-px bg-[#2020c8]" />
    </div>
  </section>
)

// frames below 70 sit under the material browser
const firstMark = 7

const Timeline = () => (
  <div className="mt-[18px] flex h-[28px] shrink-0 overflow-hidden border-t border-black bg-[#2b2b2b] pl-[449px] text-[12px] text-[#b8b8b8]">
    {Array.from({ length: 16 }, (_, i) => (
      <div key={i} className="w-[61px] shrink-0 text-center leading-[14px]">
        <svg viewBox="0 0 61 13" className="h-[13px] w-[61px]" shapeRendering="crispEdges">
          <path d="M0 0v12M6 0v12M12 0v12M18 0v12M24 0v12M30 0v13M36 0v12M42 0v12M48 0v12M54 0v12" stroke="#707070" />
        </svg>
        {(firstMark + i) * 10}
      </div>
    ))}
  </div>
)

/* ---------- command panel ---------- */

const panelTabs = [
  ['Create', <g><path d="M14 3v22M3 14h22M6 6l16 16M22 6L6 22" stroke="#e8792a" strokeWidth="2" /><circle cx="14" cy="14" r="6" fill="#ffb030" /><circle cx="14" cy="14" r="3" fill="#fff3c0" /></g>],
  ['Modify', <g><path d="M4 4v20h20M4 4h20v20" stroke="#ccc" /><path d="M7 24C7 12 13 6 25 5" stroke="#4da6e8" strokeWidth="5" /><path d="M2 2h4v4H2zM22 22h4v4h-4z" fill="#eee" /></g>],
  ['Hierarchy', <g><path d="M9 2h10v9H9z" fill="#ddd" /><path d="M14 11v8M5 20l9-6 9 6" stroke="#ccc" strokeWidth="1.500" /><path d="M1 20h7v6H1zM11 20h7v6h-7zM21 20h7v6h-7z" fill="#ddd" /></g>],
  ['Motion', <g stroke="#ccc"><circle cx="17" cy="14" r="9" strokeWidth="3" fill="#777" /><circle cx="17" cy="14" r="4" strokeWidth="2" /><path d="M6 6c-3 5-3 11 0 16M3 8c-2 4-2 8 0 12" /></g>],
  ['Display', <g><path d="M2 3h24v17H2z" fill="#e8eaec" /><path d="M10 23h8M7 25h14" stroke="#ddd" strokeWidth="2" /><path d="M11 9l4-3h3v7l-4 4h-3z" stroke="#222" strokeWidth="1.500" /></g>],
  ['Utilities', <g><path d="M4 25L17 9" stroke="#b8766a" strokeWidth="4" /><path d="M11 6c4-5 9-4 11 0l4 3-2 4-4-4-3 3z" fill="#ccd0d4" /></g>],
]

const Check = ({ label, checked, className = '' }) => (
  <label className={`flex items-center gap-[5px] whitespace-nowrap ${className}`}>
    <span className="relative size-[13px] shrink-0">
      <input type="checkbox" defaultChecked={checked} className="peer block size-full appearance-none border-l-2 border-t-2 border-black bg-[#555]" />
      <svg viewBox="0 0 12 12" className="pointer-events-none absolute inset-0 hidden size-full peer-checked:block" fill="none"><path d="M4 6l2 3 4-6" stroke="#fff" strokeWidth="2" /></svg>
    </span>
    {label}
  </label>
)

const Spinner = () => (
  <span className="flex h-[18px] w-[12px] flex-col items-center justify-center gap-[3px] border-b border-r border-black text-[#ddd]">
    <button aria-label="Increase"><svg viewBox="0 0 5 3" className="block h-[3px] w-[5px]"><path d="M0 3l2.500-3L5 3z" fill="#ddd" /></svg></button>
    <button aria-label="Decrease"><svg viewBox="0 0 5 3" className="block h-[3px] w-[5px]"><path d="M0 0l2.500 3L5 0z" fill="#ddd" /></svg></button>
  </span>
)

const NumberBox = ({ label, value }) => (
  <span className="flex gap-[2px]">
    <input aria-label={label} defaultValue={value} className="h-[18px] w-[37px] border-l-2 border-t-2 border-black bg-[#555] pl-[2px] text-[12px] text-[#ddd]" />
    <Spinner />
  </span>
)

const Group = ({ title, className, children }) => (
  <fieldset className={`min-w-0 border border-[#151515] pl-2 pr-1 ${className}`}>
    <legend className="-ml-1 px-[3px] leading-4">{title}</legend>
    {children}
  </fieldset>
)

const CommandPanel = () => (
  <aside className="flex w-[363px] shrink-0 flex-col bg-[#444] pl-[2px] text-[11px] text-[#cacaca]">
    <div className="mt-[3px] flex h-[27px] border-b border-black">
      {panelTabs.map(([name, art], i) => (
        <button
          key={name}
          aria-label={name}
          className={i === 1 ? 'h-[27px] w-[29px] rounded-t border border-b-0 border-black bg-[#444] pl-[2px]' : 'h-[26px] w-[29px] rounded-t border border-b-0 border-black bg-[#3a3a3a] pl-[2px]'}
        >
          <Icon className="size-[22px]">{art}</Icon>
        </button>
      ))}
    </div>
    <div className="flex min-h-0 flex-1">
      <div className="w-[176px] shrink-0 pl-[9px] pt-[5px]">
        <div className="flex gap-1">
          <input aria-label="Object name" defaultValue="2 Objects Selected" className="h-[20px] w-[144px] border-l-2 border-t-2 border-black bg-[#555] pl-[2px] text-[11px] text-[#111]" />
          <button aria-label="Object color" className="h-5 w-4 border-l-2 border-t-2 border-[#222] bg-[#5e5e5e]" />
        </div>
        <div className="relative mt-[7px] h-6 w-[162px]">
          <select aria-label="Modifier List" className="size-full appearance-none border-2 border-black border-r-[#444] bg-[#505050] pl-px text-[12px] text-[#e4e4e4]"><option>Modifier List</option></select>
          <span className="pointer-events-none absolute right-[2px] top-[2px] grid h-[20px] w-[17px] place-items-center bg-white"><Chevron /></span>
        </div>
        <ul className="mt-[5px] h-[131px] w-[160px] border-2 border-[#e8e8e8] bg-[#555]">
          <li className="flex h-4 items-center border-b border-[#8a8a8a] bg-[#3c3c3c] pl-2">
            <svg viewBox="0 0 9 13" className="h-[13px] w-[9px]"><circle cx="4.500" cy="4.500" r="3.500" fill="#333" stroke="#fff" strokeWidth="1.500" /><path d="M4.500 5v8" stroke="#fff" strokeWidth="2.500" /></svg>
            <span className="ml-[26px] font-['Open_Sans',sans-serif] text-[12px] font-bold italic leading-3 text-[#e8e8e8]">TurboSmooth</span>
          </li>
        </ul>
        <div className="mt-[5px] flex h-6 w-[150px] items-center justify-between pl-[2px]">
          <button aria-label="Pin stack"><Icon className="size-[18px]" box="0 0 18 18"><path d="M1 9h7M8 5v8M15 5v8" stroke="#ddd" strokeWidth="2" /><path d="M8 7h7v4H8z" fill="#222" stroke="#ddd" /></Icon></button>
          <Sep />
          <button aria-label="Show end result" className="grid size-6 place-items-center border border-b-[#666] border-l-black border-r-[#666] border-t-black"><Icon className="size-4" box="0 0 16 16"><path d="M5 1h6v3h-1v11H6V4H5z" fill="#fff" stroke="#222" /></Icon></button>
          <Sep />
          <button aria-label="Make unique"><Icon className="size-4" box="0 0 16 16"><path d="M1 2l6 8M15 2l-6 8M4 1l3 6" stroke="#111" strokeWidth="1.500" /><circle cx="8" cy="12" r="2.500" fill="#fff" /></Icon></button>
          <button aria-label="Remove modifier"><Icon className="size-4" box="0 0 16 16"><circle cx="8" cy="11" r="4.500" fill="#eee" stroke="#111" /><path d="M4 6l8-2M8 4V1l4 2" stroke="#ddd" strokeWidth="1.500" /></Icon></button>
          <Sep />
          <button aria-label="Configure sets"><Icon className="size-4" box="0 0 16 16"><path d="M1 1h12v12H1z" fill="#eee" stroke="#223" /><path d="M1 1h12v3H1z" fill="#1a2fc0" /><path d="M8 6h7v9H8z" fill="#fff" stroke="#222" strokeDasharray="2 1" /></Icon></button>
        </div>
        <i className="-ml-[7px] mt-[11px] block h-[3px] w-[174px] bg-black" />
        <i className="-ml-[7px] mt-[6px] block h-px w-[171px] bg-[#1a1a1a]" />
        <div className="-ml-[3px] mt-3 w-[164px] border border-[#151515] px-[5px] pb-[5px]">
          <button className="relative -mt-[9px] block h-[17px] w-full border border-[#666] bg-[#404040] text-[12px] leading-[15px] text-[#e2e2e2]">
            <span className="absolute left-1">-</span>TurboSmooth
          </button>
          <Group title="Main" className="h-[114px]">
            <div className="flex items-center justify-end gap-[6px]">Iterations:<NumberBox label="Iterations" value="0" /></div>
            <div className="mt-[5px] flex items-center justify-between"><Check label="Render Iters:" checked /><NumberBox label="Render Iters" value="2" /></div>
            <Check label="Isoline Display" className="mt-3 h-4" />
            <Check label="Explicit Normals" className="mt-[6px] h-4" />
          </Group>
          <Group title="Surface Parameters" className="mt-[2px] h-[96px]">
            <Check label="Smooth Result" checked className="mt-px h-4" />
            <div className="mt-[2px] leading-4">Separate</div>
            <Check label="Materials" className="ml-[31px] mt-[2px] h-4" />
            <Check label="Smoothing Groups" className="ml-[31px] mt-[2px] h-4" />
          </Group>
          <Group title="Update Options" className="mt-px h-[104px]">
            {['Always', 'When Rendering', 'Manually'].map((o, i) => (
              <label key={o} className="ml-2 flex h-[17px] items-center gap-[7px]">
                <input type="radio" name="update" defaultChecked={i === 0} className="size-[10px] appearance-none rounded-full border-2 border-[#1a1a1a] border-b-[#777] border-r-[#777] bg-[#555] checked:bg-white" />{o}
              </label>
            ))}
            <button className="ml-[18px] mt-[6px] block h-[21px] w-[95px] border border-b-2 border-r-2 border-[#383838] border-b-black border-r-black bg-[#484848]">Update</button>
          </Group>
        </div>
      </div>
      <div className="ml-[7px] mr-[5px] mt-px mb-1 flex-1 border border-b-[#333] border-l-black border-r-[#333] border-t-black" />
    </div>
  </aside>
)

/* ---------- status bar ---------- */

const Glyph = ({ name, children }) => (
  <button aria-label={name} className="grid w-6 place-items-center"><Icon className="size-[22px]" box="0 0 22 22">{children}</Icon></button>
)

const StatusBar = () => (
  <footer className="flex h-[54px] shrink-0 border-b-2 border-[#d0d0d0] bg-[#444]">
    <div className="ml-[77px] flex-1 pt-[3px]">
      <div className="flex items-center">
        <div className="h-[22px] flex-1 border border-[#383838] border-t-black" />
        <div className="flex w-[500px] gap-[3px] pl-[2px]">
          <Glyph name="Light"><path d="M11 3c4 0 4 5 1 11h-2C7 8 7 3 11 3z" fill="#e06a78" stroke="#f4c0c8" /><path d="M11 14v5" stroke="#eee" strokeWidth="1.500" /></Glyph>
          <Glyph name="Lock selection"><path d="M8 10V7a3 3 0 0 1 6 0v3" stroke="#ddd" strokeWidth="1.500" /><path d="M6 10h10v8H6z" fill="#f0e4cc" /><path d="M11 12v4" stroke="#a67" strokeWidth="2" /></Glyph>
          <Glyph name="Absolute mode"><path d="M4 4h14v14H4z" fill="#dfe4ea" /><circle cx="11" cy="11" r="3.500" stroke="#333" strokeWidth="1.500" /><path d="M11 4v4M11 14v4M4 11h4M14 11h4" stroke="#333" strokeWidth="1.500" /></Glyph>
        </div>
      </div>
      <div className="mt-1 h-5 border-t border-black" />
    </div>
    <div className="w-[363px] border-t-2 border-[#1c1c1c] text-[12px] text-[#c4c4c4]">
      <div className="flex h-6 items-center">
        <button className="h-6 w-[22px] border border-l-0 border-black">Key</button>
        <span className="relative ml-[5px] mr-[5px] h-5 w-[113px]">
          <select aria-label="Key mode" className="size-full appearance-none border-l-2 border-t-2 border-black bg-[#e3e3e3] pl-[2px] text-[12px] leading-4 text-black"><option>Selected</option></select>
          <Chevron className="absolute right-[3px] top-[7px]" />
        </span>
        <Glyph name="Go to start"><path d="M3 6v10M19 6v10l-7-5zM11 6v10l-7-5z" stroke="#ddd" strokeWidth="1.500" /></Glyph>
        <Glyph name="Previous frame"><path d="M10 6v10L2 11zM14 6v10M18 6v10" stroke="#ddd" strokeWidth="1.500" /></Glyph>
        <Glyph name="Play"><path d="M5 6v10l9-5z" stroke="#ddd" strokeWidth="1.500" /><path d="M17 20l3-3" stroke="#fff" strokeWidth="2" /></Glyph>
        <Glyph name="Next frame"><path d="M12 6v10l8-5zM8 6v10M4 6v10" stroke="#ddd" strokeWidth="1.500" /></Glyph>
        <Glyph name="Go to end"><path d="M19 6v10M3 6v10l7-5zM11 6v10l7-5z" stroke="#ddd" strokeWidth="1.500" /></Glyph>
        <Glyph name="Zoom"><circle cx="9" cy="10" r="5" fill="#e4ecf0" /><path d="M12 13l5 5" stroke="#ccc" strokeWidth="2.500" /><path d="M15 5h5M17.500 3v5M15 10h5" stroke="#ddd" /></Glyph>
        <Glyph name="Zoom all"><path d="M4 4h6v6H4zM12 4h6v6h-6zM4 12h6v6H4z" fill="#dde" /><circle cx="14" cy="14" r="3.500" fill="#eef" stroke="#444" /><path d="M16 16l4 4" stroke="#ddd" strokeWidth="2" /></Glyph>
        <Glyph name="Zoom extents"><path d="M3 6V3h3M16 3h3v3M3 16v3h3" stroke="#ddd" strokeWidth="1.500" /><path d="M7 9l2-2h6v6l-2 3H7z" fill="#7ab06a" stroke="#bdb" /><path d="M16 20l4-4" stroke="#fff" strokeWidth="2" /></Glyph>
        <Glyph name="Zoom extents all"><path d="M8 3h5v6H8zM15 3h5v6h-5zM15 11h5v5h-5z" fill="#dde" /><path d="M2 12l2-2h7v6l-2 3H2z" fill="#7ab06a" stroke="#bdb" /></Glyph>
      </div>
      <div className="flex h-6 items-center">
        <button className="h-6 w-[22px] border border-l-0 border-black">Key</button>
        <Icon className="ml-[5px] size-5" box="0 0 20 20"><path d="M3 3l12 13" stroke="#e06a78" strokeWidth="2" /><path d="M2 2h3v3H2z" fill="#fff" /><path d="M15 19l4-4" stroke="#fff" strokeWidth="2" /></Icon>
        <button className="ml-1 mr-[5px] h-[21px] w-[89px] border border-b-2 border-r-2 border-[#333] border-b-black border-r-black leading-4">Key Filters...</button>
        <Glyph name="Key mode toggle"><path d="M3 6v10M19 6v10M10 7v8l-5-4zM12 7v8l5-4z" stroke="#ddd" strokeWidth="1.500" /></Glyph>
        <input aria-label="Frame" defaultValue="0" className="h-5 w-[62px] border-l-2 border-t-2 border-black bg-[#555] pl-[2px] text-[12px] text-[#ccc]" />
        <span className="w-1" />
        <Spinner />
        <Glyph name="Time configuration"><path d="M4 3h12v14H4z" fill="#dde" stroke="#222" /><path d="M5 4h9v6H5z" fill="#2b62a8" /><circle cx="15" cy="14" r="4.500" fill="#eef" stroke="#345" /><path d="M15 11v3h3" stroke="#222" /></Glyph>
        <Glyph name="Field of view"><path d="M2 5l13 6-13 6" stroke="#ccc" strokeWidth="1.500" /><path d="M12 5c2 4 2 8 0 12" stroke="#aaa" /><path d="M17 20l3-3" stroke="#fff" strokeWidth="2" /></Glyph>
        <Glyph name="Walk"><path d="M4 5c3-4 6 1 4 8H5zM5 15h3v3H5zM12 6c3-4 6 1 4 7h-3zM13 15h3v3h-3z" fill="#f0f0f0" /><path d="M17 20l3-3" stroke="#fff" strokeWidth="2" /></Glyph>
        <Glyph name="Orbit"><circle cx="10" cy="11" r="4.500" fill="#444" stroke="#ddd" strokeWidth="1.500" /><path d="M10 10V4a6 6 0 0 1 6 7z" fill="#7ab06a" /><path d="M3 18l3-4M10 2v3" stroke="#eee" strokeWidth="2" /><path d="M17 20l3-3" stroke="#fff" strokeWidth="2" /></Glyph>
        <Glyph name="Maximize viewport"><path d="M3 3h12v12H3z" fill="#dde" stroke="#222" /><path d="M6 6l9 9M6 10V6h4M16 11v5h-5" stroke="#222" strokeWidth="1.500" /></Glyph>
      </div>
    </div>
  </footer>
)

/* ---------- floating windows ---------- */

const ScrollBar = ({ thumb }) => (
  <div className="flex h-[17px] items-center bg-[#f0f0f0] text-[#444]">
    <button aria-label="Scroll left" className="w-[17px]"><svg viewBox="0 0 17 10" className="h-[10px] w-[17px]" fill="none"><path d="M10 1L6 5l4 4" stroke="#333" strokeWidth="2" /></svg></button>
    <div className="flex-1 self-stretch"><div className={`h-full bg-[#cdcdcd] ${thumb}`} /></div>
    <button aria-label="Scroll right" className="w-[17px]"><svg viewBox="0 0 17 10" className="h-[10px] w-[17px]" fill="none"><path d="M7 1l4 4-4 4" stroke="#333" strokeWidth="2" /></svg></button>
  </div>
)

const LayerSheets = ({ mark }) => (
  <Icon className="size-[18px]" box="0 0 18 18">
    <path d="M2 5l4-3h9l-4 3z" fill="#6fb8e8" /><path d="M2 8l4-2h9l-4 2zM2 11l4-2h9l-4 2zM2 14l4-2h9l-4 2z" fill="#e8f0f6" />
    {mark}
  </Icon>
)

const cursor = <path d="M9 6l7 8h-3l1 3-2 .5-1-3-2 2z" fill="#fff" stroke="#222" strokeWidth=".7" />

const layerTools = [
  ['New layer', <LayerSheets mark={<circle cx="14" cy="14" r="2.500" fill="#e8792a" />} />],
  ['Delete layer', <Icon className="size-[18px]" box="0 0 18 18"><path d="M4 3l10 12M14 3L4 15" stroke="#ccc" strokeWidth="3" /></Icon>],
  ['Add to layer', <Icon className="size-[18px]" box="0 0 18 18"><path d="M9 2v14M2 9h14" stroke="#ccc" strokeWidth="3.500" /></Icon>],
  ['Select objects', <Icon className="size-[18px]" box="0 0 18 18"><path d="M2 4l2-2h11v10l-2 3H2z" fill="#c8c8c8" />{cursor}</Icon>],
  ['Highlight layer', <LayerSheets mark={cursor} />],
  ['Hide layers', <LayerSheets mark={<path d="M10 8h6v5l-2 3h-2l-2-3z" fill="#c4dcf4" stroke="#567" />} />],
  ['Freeze layers', <LayerSheets mark={<path d="M13 8v9M9 10l8 5M17 10l-8 5" stroke="#9cd4f8" strokeWidth="2" />} />],
]

const layerMark = (
  <Icon className="size-[14px]" box="0 0 14 14"><path d="M2 4l3-2h7l-2 2zM2 8l3-2h7l-2 2zM2 12l3-2h7l-2 2z" fill="#eee" stroke="#111" strokeWidth=".8" /></Icon>
)
const cubeMark = (
  <Icon className="size-[14px]" box="0 0 14 14"><path d="M2 5l4-3 5 2v6l-4 3-5-2z" fill="#ddd" stroke="#111" /><path d="M7 7v6M2 5l5 2 4-3" stroke="#111" /></Icon>
)

const LayerWindow = () => (
  <section className="absolute left-0 top-[685px] w-[336px] border-r border-[#555] bg-[#444] pb-[13px] text-[12px] shadow-[2px_2px_8px_rgba(0,0,0,0.5)]">
    <div className="flex h-8 items-center bg-white text-[#8a8a8a]">
      <AppBadge className="-ml-[1px] size-[15px]" />
      <h2 className="ml-[6px] flex-1">Layer: 0 (default)</h2>
      <button aria-label="Help" className="mr-9 text-[14px]">?</button>
      <button aria-label="Close" className="mr-4"><Close /></button>
    </div>
    <div className="flex h-7 items-center gap-[12px] pb-[2px] pl-[6px]">
      {layerTools.map(([n, art]) => <button key={n} aria-label={n} className="size-[18px]">{art}</button>)}
    </div>
    <div className="ml-px w-[324px] border border-[#e0e0e0] bg-[#444]">
      <table className="w-full table-fixed text-left text-[11px] text-[#dcdcdc]">
        <thead>
          <tr className="h-[24px] bg-white text-[12px] text-[#222]"><th className="pl-[5px] font-normal">Layers</th><th className="w-4 border-l border-[#ddd]" /></tr>
        </thead>
        <tbody className="bg-[#555] leading-4">
          <tr className="h-[18px]"><td><div className="flex items-center gap-px pl-[18px]">{layerMark}0 (default)</div></td><td><Icon className="size-[13px]" box="0 0 13 13"><path d="M1 7l4 4 7-9" stroke="#111" strokeWidth="1.500" /></Icon></td></tr>
          <tr className="h-5">
            <td><div className="flex items-center gap-px whitespace-nowrap pl-[3px]"><span className="mr-[5px] grid size-[9px] place-items-center border border-[#888]"><i className="h-px w-[5px] bg-[#999]" /></span>{layerMark}Cutting_Head_for_DMU_200_Gantry_CNC_Machine</div></td>
            <td><input type="checkbox" aria-label="Current layer" className="block size-[11px] appearance-none rounded-sm border-2 border-[#eee]" /></td>
          </tr>
          <tr className="h-5"><td><div className="flex items-center gap-[2px] pl-[33px]">{cubeMark}Cutter</div></td><td /></tr>
          <tr className="h-5"><td><div className="flex items-center gap-[2px] pl-[33px]">{cubeMark}Cutter_Back_Guide</div></td><td /></tr>
        </tbody>
      </table>
      <div className="h-[31px]" />
      <ScrollBar thumb="w-[169px]" />
    </div>
  </section>
)

const MaterialBrowser = () => (
  <section className="absolute bottom-0 left-0 h-[143px] w-[558px] bg-[#444] font-['Open_Sans',sans-serif] text-[11px] text-[#dcdcdc] shadow-[2px_0_8px_rgba(0,0,0,0.5)]">
    <div className="flex h-[31px] items-center bg-white text-[12px] text-[#8a8a8a]">
      <AppBadge className="-ml-[3px] size-[15px]" />
      <h2 className="ml-[6px] flex-1">Material/Map Browser</h2>
      <button aria-label="Close" className="mr-2"><Close /></button>
    </div>
    <div className="mt-[3px] flex h-[18px] items-center">
      <span className="w-[11px] text-[7px] text-black">▼</span>
      <input aria-label="Search by Name" placeholder="Search by Name ..." className="h-full flex-1 border-l-2 border-t-2 border-black bg-[#555] pb-[3px] pl-[1px] text-[11px] placeholder:text-[#dcdcdc]" />
      <span className="w-[3px]" />
    </div>
    <div className="mt-[6px] flex h-[85px] border-t border-black">
      <div className="flex-1">
        <button className="block h-4 w-full border-r-2 border-b border-[#666] bg-[#404040] text-left leading-[15px]"><span className="mr-[3px]">-</span>Scene Materials</button>
        <div className="ml-1 mr-[6px] mt-1 h-[64px] border border-black">
          <button className="flex h-[20px] w-full items-center gap-[5px] whitespace-nowrap border-2 border-[#eee] bg-linear-[115deg,#444_95%,#b80000_95%] px-px text-white">
            <Icon className="size-[15px]" box="0 0 14 14"><path d="M0 0h14v14H0z" fill="#777" /><path d="M2 9c0-6 7-8 10-5M4 12c1-4 5-6 8-6M1 5l4-3M9 9l3 3M3 8v4" stroke="#222" strokeWidth="1.500" /></Icon>
            <span>Cutting_Head_for_DMU_200_Gantry_CNC_Machine_MAT&nbsp; ( VRayMtl )&nbsp; [Cutter, Cutter_Back_Guide]</span>
          </button>
        </div>
      </div>
      <div className="flex w-[9px] flex-col justify-end border-l border-black bg-[#2c2c2c] pb-[6px]"><i className="h-[10px] border border-[#999] bg-[#777]" /></div>
    </div>
  </section>
)

const maps = ['diffuse', 'emission', 'Fresnel', 'glossines', 'ior_refraction', 'normal', 'refraction', 'Specular']

const vaultMark = <Icon className="size-[14px]" box="0 0 14 14"><path d="M1 4l5-3 6 2v7l-4 3-7-3z" fill="#c8c8c8" stroke="#333" /><path d="M7 6v7M4 5v6" stroke="#444" /></Icon>
const maxMark = <Icon className="size-[16px]" box="0 0 16 16"><path d="M1 0h14v16H1z" fill="#d8eef0" stroke="#fff" /><path d="M5 3h6v4H8h3v4H5" stroke="#138086" strokeWidth="2.500" /></Icon>
const mapMark = <Icon className="size-[14px]" box="0 0 14 14"><path d="M5 2h8l-4 10H1z" fill="#17c41a" stroke="#111" strokeWidth="2" /></Icon>
const fileMark = <Icon className="size-[14px]" box="0 0 14 14"><path d="M2 0h8l3 3v11H2z" fill="#f4f8fc" /><path d="M4 4h6v6H4z" fill="#1d73c8" /><path d="M5 9l4-4" stroke="#9cf" /></Icon>

const assets = [
  [vaultMark, 'Autodesk Vault', 'pl-[25px]'],
  [maxMark, 'Cutting_Head_for_DMU_200_Gantry_CNC_Machine_max_vray.max', 'pl-[38px]'],
  [mapMark, 'Maps / Shaders', 'pl-[56px]'],
  ...maps.map((m) => [fileMark, `DMU_200_Gantry_CNC_Machine_UV_2_${m}.png`, 'pl-[71px]']),
]

const AssetWindow = () => (
  <section className="absolute bottom-[5px] right-[362px] w-[428px] bg-[#444] px-[3px] pb-[3px] font-['Open_Sans',sans-serif] text-[11px] shadow-[0_0_10px_rgba(0,0,0,0.6)]">
    <div className="-mx-[3px] h-[52px] bg-white text-[#8a8a8a]">
      <div className="flex h-[31px] items-center pl-2">
        <AppBadge />
        <h2 className="ml-[6px] flex-1 text-[11px]">Asset Tracking</h2>
        <div className="mr-[17px] flex items-center gap-[35px]">
          <button aria-label="Minimize"><i className="block h-px w-[11px] bg-[#888]" /></button>
          <button aria-label="Maximize" className="size-[11px] border border-[#888]" />
          <button aria-label="Close"><Close className="size-[11px]" /></button>
        </div>
      </div>
      <nav className="flex gap-[14px] pl-[7px] leading-5 text-[#666]">
        {['Server', 'File', 'Paths', 'Bitmap Performance and Memory', 'Options'].map((m) => <button key={m}>{m}</button>)}
      </nav>
    </div>
    <div className="flex h-[31px] items-center gap-[10px] pl-1 pt-[2px]">
      <button aria-label="Refresh"><Icon className="size-4" box="0 0 16 16"><path d="M2 0h11v16H2z" fill="#f2f6f2" /><path d="M4 6c0-4 6-4 7-1M11 10c0 4-6 4-7 1M11 2v4H8M4 14v-4h3" stroke="#1a9a2a" strokeWidth="1.500" /></Icon></button>
      <button aria-label="List"><Icon className="size-4" box="0 0 16 16"><path d="M3 1h11v14H3z" fill="#fff" stroke="#222" /><path d="M5 4h7M5 7h7M5 10h7M5 13h7" stroke="#333" /></Icon></button>
      <button aria-label="Tree"><Icon className="size-4" box="0 0 16 16"><path d="M1 1h14v14H1z" fill="#dde6f0" /><path d="M3 3h4v3H3zM8 7h4M8 11h4M5 6v6h3" stroke="#333" strokeWidth="1.500" /><path d="M3 3h4v3H3z" fill="#d8c840" /></Icon></button>
      <button aria-label="Table" className="-ml-[2px] grid size-[23px] place-items-center border-l-2 border-t-2 border-[#14233f] bg-[#3d7dd8]"><Icon className="size-4" box="0 0 16 16"><path d="M1 2h14v12H1z" fill="#fff" /><path d="M1 6h14M1 9h14M1 12h14M5 4v10M8 4v10M11 4v10" stroke="#456" /></Icon></button>
      <button aria-label="Web help" className="ml-auto"><Icon className="size-[18px]" box="0 0 18 18"><circle cx="5" cy="11" r="4" fill="#2a4fd0" /><circle cx="4" cy="10" r="1" fill="#cfe" /><path d="M8 5c0-5 8-4 7 0 0 3-3 3-4 6M11 14v2" stroke="#ccc" strokeWidth="2.500" /></Icon></button>
      <button aria-label="Context help" className="mr-[3px]"><Icon className="size-[18px]" box="0 0 18 18"><path d="M2 2l6 7-3 1 1 5-4-4z" fill="#ddd" /><path d="M8 5c0-5 8-4 7 0 0 3-3 3-4 6M11 14v2" stroke="#bbb" strokeWidth="2.500" /></Icon></button>
    </div>
    <div className="border-2 border-[#8a8a8a] border-r-[#ccc]">
      <table className="h-[261px] w-full table-fixed text-left text-[#d0d0d0]">
        <thead><tr className="h-[25px] border-b border-[#999] bg-white text-[12px] text-[#222]"><th className="pl-[5px] font-normal">Name</th></tr></thead>
        <tbody>
          {assets.map(([mark, name, pad], i) => (
            <tr key={name} className="border-b border-[#dedede] bg-[#555]">
              <td>
                <div className={`flex items-center whitespace-nowrap leading-[16px] ${pad}`}>
                  {mark}
                  <span className={i === 3 ? 'ml-px flex-1 bg-[#f0f0f0] pl-[2px] leading-[18px] text-black' : 'ml-px pl-[2px] leading-[18px]'}>{name}</span>
                </div>
              </td>
            </tr>
          ))}
          <tr className="border-b border-[#dedede] bg-[#555]"><td><div className="h-[18px]" /></td></tr>
        </tbody>
      </table>
      <div className="h-[2px]" />
      <ScrollBar thumb="w-[169px]" />
    </div>
    <div className="mt-[5px] h-6 border-2 border-[#e4e4e4] outline outline-[#777]" />
  </section>
)

const App = () => (
  <div className="relative flex h-screen flex-col overflow-hidden bg-[#444] font-['Roboto','Open_Sans',sans-serif]">
    <TitleBar />
    <MenuBar />
    <button aria-label="Application menu" className="absolute left-0 top-[9px] flex h-[43px] w-[39px] items-center border border-[#222] bg-linear-to-b from-[#c4c4c4] to-[#8a8a8a] pl-[3px] text-[7px]">
      <svg viewBox="0 0 24 32" className="h-[30px] w-[22px]">
        <path d="M2 1h14l-5 7z" fill="#0a4a4c" /><path d="M16 1l7 14-6 6-6-13z" fill="#1fa09a" /><path d="M2 1l9 7 6 13-8-2L2 9z" fill="#137a78" />
        <path d="M9 19l8 2-3 9H3l-2-6z" fill="#0e5f60" /><path d="M17 21l6-6-3 12-6 3z" fill="#2ab8ae" />
      </svg>
      <span className="ml-[3px]">▼</span>
    </button>
    <Toolbar />
    <Ribbon />
    <main className="flex min-h-0 flex-1">
      <SideTools />
      <div className="flex min-w-0 flex-1 flex-col">
        <Viewport />
        <Timeline />
      </div>
      <CommandPanel />
    </main>
    <StatusBar />
    <LayerWindow />
    <MaterialBrowser />
    <AssetWindow />
  </div>
)

export default App
